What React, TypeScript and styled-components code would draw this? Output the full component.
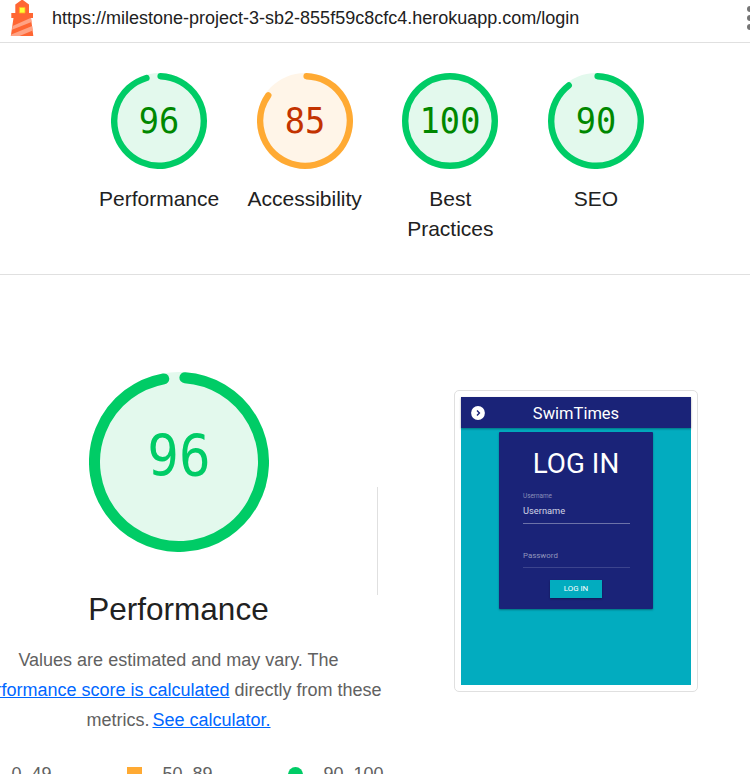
import React from "react";
import styled, { createGlobalStyle } from "styled-components";

const GlobalStyle = createGlobalStyle`
  * { box-sizing: border-box; }
  body { margin: 0; background: #fff; overflow: hidden; }
`;

const Page = styled.div`
  width: 750px;
  height: 774px;
  overflow: hidden;
  background: #fff;
  color: #212121;
  font-family: "Liberation Sans", Arial, sans-serif;
  font-size: 21px;
  line-height: 30px;
`;

const Topbar = styled.header`
  display: flex;
  height: 43px;
  overflow: hidden;
  border-bottom: 1px solid #e0e0e0;
`;

const Logo = styled.svg`
  flex: none;
  display: block;
  width: 24px;
  height: 36px;
  margin-left: 10px;
`;

const Url = styled.span`
  flex: 1;
  margin-left: 18px;
  font-size: 18px;
  line-height: 36px;
  white-space: nowrap;
`;

const MenuDots = styled.svg`
  flex: none;
  display: block;
  width: 4px;
  height: 36px;
`;

const Scores = styled.section`
  display: flex;
  height: 232px;
  padding: 30px 0 0 86.2px;
  border-bottom: 1px solid #e0e0e0;
`;

const Score = styled.div`
  display: flex;
  flex-direction: column;
  align-items: center;
  width: 145.67px;
`;

const Dial = styled.svg<{ $size: number }>`
  flex: none;
  display: block;
  width: ${(p) => p.$size}px;
  height: ${(p) => p.$size}px;
`;

const DialValue = styled.text<{ $size: number }>`
  font-family: "DejaVu Sans Mono", monospace;
  font-size: ${(p) => p.$size}px;
  text-anchor: middle;
`;

const ScoreLabel = styled.span`
  width: 120px;
  margin-top: 15px;
  text-align: center;
`;

const Category = styled.main`
  display: flex;
  height: 499px;
`;

const Summary = styled.section`
  flex: none;
  display: flex;
  flex-direction: column;
  align-items: center;
  width: 377px;
  padding-top: 97px;
`;

const SummaryInner = styled.div`
  display: flex;
  flex-direction: column;
  align-items: center;
  width: 414px;
  margin-left: -20px;
`;

const Title = styled.h1`
  margin: 36px 0 0;
  font-size: 31.5px;
  font-weight: 400;
  line-height: 42px;
`;

const Description = styled.p`
  margin: 15px 0 0;
  color: #616161;
  font-size: 18px;
  line-height: 30px;
  text-align: center;
  white-space: nowrap;
`;

const Link = styled.a`
  color: #0067ff;
  text-decoration: underline;
`;

const CalculatorLink = styled(Link)`
  margin-left: -2px;
`;

const Legend = styled.div`
  display: flex;
  align-self: flex-start;
  margin: 24px 0 0 4px;
  color: #616161;
  font-size: 18px;
  line-height: 30px;
`;

const Range = styled.span<{ $width: number }>`
  flex: none;
  display: flex;
  align-items: center;
  gap: 21px;
  width: ${(p) => p.$width}px;
  white-space: nowrap;
`;

const Marker = styled.svg`
  display: block;
  width: 15px;
  height: 15px;
`;

const Divider = styled.div`
  flex: none;
  width: 1px;
  height: 108px;
  margin-top: 212px;
  background: #e0e0e0;
`;

const Frame = styled.div`
  flex: none;
  width: 244px;
  height: 302px;
  margin: 115px 0 0 76px;
  padding: 6px;
  border: 1px solid #e0e0e0;
  border-radius: 5px;
`;

const Preview = styled.div`
  height: 288px;
  background: #02acbf;
  color: #fff;
  font-family: Roboto, sans-serif;
`;

const PreviewBar = styled.div`
  display: grid;
  grid-template-columns: 34px 162px 34px;
  align-items: center;
  height: 31px;
  background: #1a2378;
  box-shadow: 0 1px 2px rgba(0, 0, 0, 0.35);
`;

const Arrow = styled.svg`
  display: block;
  width: 14px;
  height: 14px;
  margin-left: 10px;
`;

const Brand = styled.span`
  padding-top: 3px;
  font-size: 16.5px;
  line-height: 28px;
  text-align: center;
`;

const Card = styled.div`
  display: flex;
  flex-direction: column;
  width: 154px;
  height: 177px;
  margin: 4px 0 0 38px;
  padding: 14px 24px 0;
  border-radius: 1px;
  background: #1a2378;
  box-shadow: 0 1px 2px rgba(0, 0, 0, 0.35);
`;

const CardTitle = styled.span`
  margin: 0 -10px;
  font-size: 27.8px;
  line-height: 36px;
  text-align: center;
  white-space: nowrap;
`;

const FieldLabel = styled.span`
  height: 8px;
  margin-top: 10px;
  color: #8a8fb8;
  font-size: 6.4px;
  line-height: 8px;
`;

const Field = styled.div<{ $top: number; $height: number; $size: number; $color: string; $line: string }>`
  width: 107px;
  height: ${(p) => p.$height}px;
  margin-top: ${(p) => p.$top}px;
  border-bottom: 1px solid ${(p) => p.$line};
  color: ${(p) => p.$color};
  font-size: ${(p) => p.$size}px;
  line-height: 12px;
`;

const Submit = styled.span`
  align-self: center;
  width: 52px;
  height: 18px;
  margin-top: 12px;
  background: #02acbf;
  box-shadow: 0 1px 2px rgba(0, 0, 0, 0.3);
  font-size: 7.9px;
  line-height: 18px;
  text-align: center;
`;

const GREEN = "#00cc66";
const ORANGE = "#ffaa33";

type GaugeProps = {
  value: number;
  size: number;
  stroke: number;
  start: number;
  end: number;
  ring: string;
  fill: string;
  ink: string;
  fontSize: number;
  baseline: number;
};

function Gauge({ value, size, stroke, start, end, ring, fill, ink, fontSize, baseline }: GaugeProps) {
  const c = size / 2;
  const r = c - stroke / 2;
  const point = (deg: number) => {
    const a = (deg * Math.PI) / 180;
    return `${c + r * Math.sin(a)} ${c - r * Math.cos(a)}`;
  };
  return (
    <Dial $size={size} viewBox={`0 0 ${size} ${size}`}>
      <circle cx={c} cy={c} r={c} fill={fill} />
      {value === 100 ? (
        <circle cx={c} cy={c} r={r} fill="none" stroke={ring} strokeWidth={stroke} />
      ) : (
        <path
          d={`M${point(start)} A${r} ${r} 0 1 1 ${point(end)}`}
          fill="none"
          stroke={ring}
          strokeWidth={stroke}
          strokeLinecap="round"
        />
      )}
      <DialValue $size={fontSize} transform={`translate(${c} ${baseline}) scale(.975 1.04)`} fill={ink}>
        {value}
      </DialValue>
    </Dial>
  );
}

const scores = [
  { label: "Performance", value: 96, end: 343.7 },
  { label: "Accessibility", value: 85, end: 305 },
  { label: "Best Practices", value: 100, end: 360 },
  { label: "SEO", value: 90, end: 322.5 },
];

export default function App() {
  return (
    <Page>
      <GlobalStyle />
      <Topbar>
        <Logo viewBox="0 0 24 36">
          <path d="M12.2 -.5L19 4.4V13H23V18H21L23.3 36H.8L3.5 18H1.3V13H5.3V4.4Z" fill="#ff6633" />
          <path d="M2.6 26L20.5 18H21L21.5 22L2 29.8Z M1.2 34.5L22.2 26L22.8 30.5L9.5 36H1Z" fill="#ffa385" />
          <path d="M9.4 7.4H15V13H9.4Z" fill="#ffff33" stroke="#ffaa22" strokeWidth=".8" />
        </Logo>
        <Url>https://milestone-project-3-sb2-855f59c8cfc4.herokuapp.com/login</Url>
        <MenuDots viewBox="0 0 4 36">
          <circle cx="4" cy="9" r="3" fill="#757575" />
          <circle cx="4" cy="18" r="3" fill="#757575" />
          <circle cx="4" cy="27" r="3" fill="#757575" />
        </MenuDots>
      </Topbar>
      <Scores>
        {scores.map((s) => (
          <Score key={s.label}>
            <Gauge
              value={s.value}
              size={96}
              stroke={6.4}
              start={2.05}
              end={s.end}
              ring={s.value >= 90 ? GREEN : ORANGE}
              fill={s.value >= 90 ? "#e3f9ed" : "#fff5e8"}
              ink={s.value >= 90 ? "#008800" : "#c33300"}
              fontSize={34.56}
              baseline={60}
            />
            <ScoreLabel>{s.label}</ScoreLabel>
          </Score>
        ))}
      </Scores>
      <Category>
        <Summary>
          <SummaryInner>
            <Gauge
              value={96}
              size={180}
              stroke={11}
              start={4}
              end={349.6}
              ring={GREEN}
              fill="#e3f9ed"
              ink={GREEN}
              fontSize={54}
              baseline={104}
            />
            <Title>Performance</Title>
            <Description>
              Values are estimated and may vary. The
              <br />
              <Link>performance score is calculated</Link> directly from these
              <br />
              metrics. <CalculatorLink>See calculator.</CalculatorLink>
            </Description>
            <Legend>
              <Range $width={151}>
                <Marker viewBox="0 0 15 15">
                  <path d="M7.5 0L15 15H0Z" fill="#ff3333" />
                </Marker>
                0–49
              </Range>
              <Range $width={161}>
                <Marker viewBox="0 0 15 15">
                  <rect width="15" height="15" fill={ORANGE} />
                </Marker>
                50–89
              </Range>
              <Range $width={100}>
                <Marker viewBox="0 0 15 15">
                  <circle cx="7.5" cy="7.5" r="7.5" fill={GREEN} />
                </Marker>
                90–100
              </Range>
            </Legend>
          </SummaryInner>
        </Summary>
        <Divider />
        <Frame>
          <Preview>
            <PreviewBar>
              <Arrow viewBox="0 0 14 14">
                <circle cx="7" cy="7" r="6.9" fill="#fff" />
                <path d="M6 4.6L8.4 7L6 9.4" fill="none" stroke="#1a2378" strokeWidth="1.4" />
              </Arrow>
              <Brand>SwimTimes</Brand>
            </PreviewBar>
            <Card>
              <CardTitle>LOG IN</CardTitle>
              <FieldLabel>Username</FieldLabel>
              <Field $top={5} $height={19} $size={9.3} $color="#d1d3e4" $line="#6c72a8">
                Username
              </Field>
              <Field $top={26} $height={18} $size={7.9} $color="#9296bd" $line="#3c448e">
                Password
              </Field>
              <Submit>LOG IN</Submit>
            </Card>
          </Preview>
        </Frame>
      </Category>
    </Page>
  );
}
